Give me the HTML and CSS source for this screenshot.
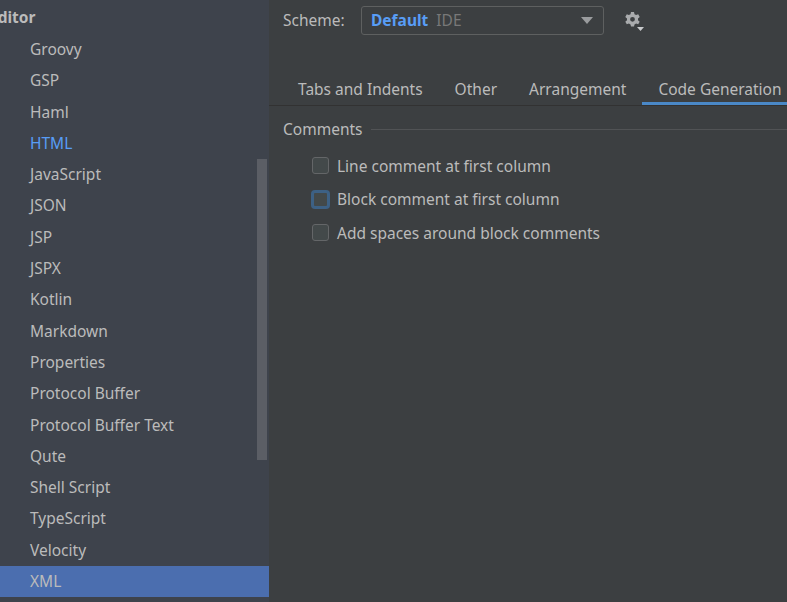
FILE: index.html
```html
<!DOCTYPE html>
<html>
<head>
<meta charset="utf-8">
<link rel="stylesheet" href="styles.css">
</head>
<body>
<div class="app">
  <aside class="sidebar">
    <div class="head">Editor</div>
    <ul class="tree">
      <li>Groovy</li>
      <li>GSP</li>
      <li>Haml</li>
      <li class="link">HTML</li>
      <li>JavaScript</li>
      <li>JSON</li>
      <li>JSP</li>
      <li>JSPX</li>
      <li>Kotlin</li>
      <li>Markdown</li>
      <li>Properties</li>
      <li>Protocol Buffer</li>
      <li>Protocol Buffer Text</li>
      <li>Qute</li>
      <li>Shell Script</li>
      <li>TypeScript</li>
      <li>Velocity</li>
      <li class="sel">XML</li>
    </ul>
    <div class="thumb"></div>
  </aside>
  <main class="pane">
    <div class="scheme">
      <span class="label">Scheme:</span>
      <div class="combo">
        <span class="name">Default</span><span class="kind">IDE</span>
        <svg class="arrow" width="12" height="7" viewBox="0 0 12 7"><path d="M0 0H12L6 7Z" fill="#9a9c9e"/></svg>
      </div>
      <svg class="gear" width="20" height="22" viewBox="0 0 20 22">
        <path fill="#a9abad" fill-rule="evenodd" d="M7 1h3l.5 2.2 1.6.9 2.1-.8 1.5 2.6-1.7 1.5v1.8l1.7 1.5-1.5 2.6-2.1-.8-1.6.9L10 15.6H7l-.5-2.2-1.6-.9-2.1.8L1.3 10.7 3 9.2V7.4L1.3 5.9 2.8 3.3l2.1.8 1.6-.9ZM8.5 5.9a2.4 2.4 0 1 0 0 4.8a2.4 2.4 0 1 0 0-4.8Z"/>
        <path fill="#c9cbcd" d="M13 16h7l-3.5 4Z"/>
      </svg>
    </div>
    <nav class="tabs">
      <span class="tab">Tabs and Indents</span>
      <span class="tab">Other</span>
      <span class="tab">Arrangement</span>
      <span class="tab active">Code Generation</span>
    </nav>
    <section class="group">
      <div class="title"><span>Comments</span><i class="rule"></i></div>
      <label class="check"><span class="box"></span>Line comment at first column</label>
      <label class="check"><span class="box focus"></span>Block comment at first column</label>
      <label class="check"><span class="box"></span>Add spaces around block comments</label>
    </section>
  </main>
</div>
</body>
</html>
```
FILE: styles.css
```css
* { box-sizing: border-box; }
html, body { margin: 0; padding: 0; }
body {
  width: 787px; height: 602px; overflow: hidden;
  font-family: "Noto Sans", "Open Sans", sans-serif;
  font-size: 15.5px;
  color: #bbbbbb;
  background: #3c3f41;
}
.app { display: flex; height: 602px; }
.sidebar {
  position: relative;
  width: 269px; flex: none;
  background: #3e434c;
  overflow: hidden;
}
.head {
  font-weight: bold;
  margin-left: -11px;
  height: 34px;
  line-height: 34px;
}
.tree { list-style: none; margin: 0; padding: 0; }
.tree li {
  height: 31.3px; line-height: 31.3px;
  padding-left: 30px;
  white-space: nowrap;
}
.tree li.link { color: #589df6; }
.tree li.sel { background: #4b6eaf; }
.thumb {
  position: absolute;
  left: 257px; top: 159px;
  width: 10px; height: 301px;
  background: #5b5e65;
}
.pane { flex: 1; min-width: 0; overflow: hidden; }
.scheme {
  display: flex; align-items: center;
  height: 40px; padding-left: 14px;
}
.label { width: 78px; }
.combo {
  display: flex; align-items: center;
  width: 243px; height: 29px;
  border: 1px solid #5e6060; border-radius: 3px;
  padding: 0 10px 0 9px;
  background: #3c3f41;
}
.name { color: #589df6; font-weight: bold; }
.kind { color: #787878; margin-left: 8px; }
.arrow { margin-left: auto; }
.gear { margin-left: 20px; margin-top: 3px; }
.tabs {
  display: flex;
  margin-top: 32px;
  height: 34px;
  border-bottom: 1px solid #323232;
  padding-left: 15px;
}
.tab {
  padding: 1px 16px 0;
  line-height: 32px;
  white-space: nowrap;
  border-bottom: 3px solid transparent;
}
.tab:first-child { padding-left: 14px; }
.tab.active { border-bottom-color: #4a88c7; }
.group { padding: 11px 0 0 14px; }
.title { display: flex; align-items: center; height: 24px; }
.rule { flex: 1; height: 1px; background: #515355; margin-left: 8px; }
.check {
  display: flex; align-items: center;
  height: 33.5px;
  padding-left: 29px;
}
.check:first-of-type { margin-top: 8px; }
.box {
  width: 17px; height: 17px;
  border: 1px solid #646668; border-radius: 3px;
  background: #43494a;
  margin-right: 8px;
}
.box.focus {
  border: 2px solid #3d6185;
  box-shadow: 0 0 0 1px #3d6185;
}
```
